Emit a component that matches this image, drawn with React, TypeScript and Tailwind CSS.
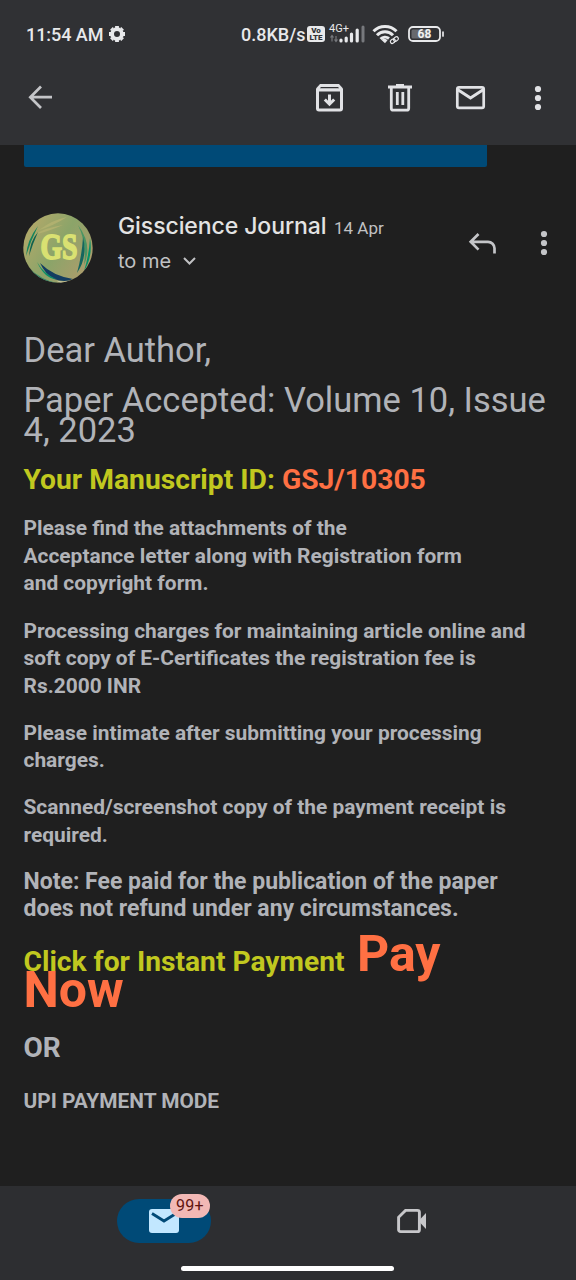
import React from "react";

type IconProps = { box: string; w: number; h: number; className?: string; children: React.ReactNode };

function Icon({ box, w, h, className = "", children }: IconProps) {
  return (
    <svg viewBox={box} width={w} height={h} fill="none" className={"block shrink-0 " + className}>
      {children}
    </svg>
  );
}

function Dots({ className = "" }: { className?: string }) {
  return (
    <Icon box="0 0 8 26" w={8} h={26} className={className}>
      <circle cx="4" cy="4" r="3.1" fill="currentColor" />
      <circle cx="4" cy="13" r="3.1" fill="currentColor" />
      <circle cx="4" cy="22" r="3.1" fill="currentColor" />
    </Icon>
  );
}

function StatusBar() {
  return (
    <div className="flex h-[68px] items-center pl-[26px] text-[#e8e9eb]">
      <span className="mt-[2px] w-[79px] whitespace-nowrap text-[18px] font-medium leading-[22px] tracking-[-0.05px]">11:54 AM</span>
      <Icon box="-10 -10 20 20" w={20} h={20} className="ml-[2px]">
        <circle r="4.900" stroke="currentColor" strokeWidth="3.800" />
        <path
          d="M0 -8V-6M0 8V6M-8 0H-6M8 0H6M-5.600 -5.600L-4.400 -4.400M5.600 5.600L4.400 4.400M-5.600 5.600L-4.400 4.400M5.600 -5.600L4.400 -4.400"
          stroke="currentColor"
          strokeWidth="3.800"
        />
      </Icon>
      <span className="ml-[114px] mt-[2px] w-[65px] whitespace-nowrap text-[18px] font-medium leading-[22px]">0.8KB/s</span>
      <div className="ml-px flex h-[16px] w-[18px] flex-col items-center justify-center rounded-[3px] bg-[#e8e9eb] text-[8px] font-black leading-[7px] text-[#303134]">
        <span>Vo</span>
        <span>LTE</span>
      </div>
      <div className="relative ml-[4px] h-[24px] w-[37px]">
        <Icon box="0 0 37 24" w={37} h={24}>
          <path d="M3 19.500v-6M7 14v6M1.500 15.500L3 13.500l1.500 2M5.500 17.500L7 19.500 8.500 17.500" stroke="#77797d" strokeWidth="1.200" />
          <path d="M12 19v-1M17.200 19v-3M22.500 19v-7M28.200 19V8" stroke="currentColor" strokeWidth="3.200" strokeLinecap="round" />
          <path d="M34 19V5" stroke="#77797d" strokeWidth="3" strokeLinecap="round" />
        </Icon>
        <span className="absolute left-0 top-[1px] text-[11px] leading-[11px]">4G+</span>
      </div>
      <Icon box="0 0 28 24" w={28} h={24} className="ml-[6px]">
        <path d="M1.500 9.300a16 16 0 0 1 23 0M5 13.300a11 11 0 0 1 16 0M8.500 17a6.500 6.500 0 0 1 8.500-.5" stroke="currentColor" strokeWidth="3" />
        <path d="M9.500 18l3.500 3.300 2.500-3a4 4 0 0 0-6-.3z" fill="currentColor" />
        <g stroke="currentColor" strokeWidth="1.200">
          <rect x="18.200" y="17.300" width="5.200" height="3.700" rx="1.850" transform="rotate(-35 20.800 19.100)" />
          <rect x="21.300" y="15.200" width="5.200" height="3.700" rx="1.850" transform="rotate(-35 23.900 17)" />
        </g>
      </Icon>
      <Icon box="0 0 38 18" w={38} h={18} className="ml-[7px]">
        <rect x="2" y="2" width="31" height="14" rx="4" stroke="currentColor" strokeWidth="1.800" />
        <rect x="4.500" y="4.500" width="18" height="9" rx="1.500" fill="#67696d" />
        <path d="M36 7v4" stroke="currentColor" strokeWidth="1.700" strokeLinecap="round" />
        <text x="17.500" y="13.200" textAnchor="middle" fontFamily="Roboto" fontWeight="700" fontSize="12" fill="#f1f1f1">68</text>
      </Icon>
    </div>
  );
}

function Toolbar() {
  return (
    <div className="flex h-[59px] items-center text-[#e1e2e5]">
      <Icon box="22 79.500 36 36" w={36} h={36} className="ml-[22px] text-[#c4c5c8]">
        <path d="M52 96.700H30.500M41 86l-10.700 10.700L41 107.500" stroke="currentColor" strokeWidth="2.700" />
      </Icon>
      <Icon box="312 80 36 36" w={36} h={36} className="ml-[254px]">
        <path fill="currentColor" d="M320 84h19l4 4.500v20a3 3 0 0 1-3 3h-21a3 3 0 0 1-3-3v-20z" />
        <path fill="#303134" d="M321 87h17l1.200 1.300h-19.400zM319 91.500h21v17h-21z" />
        <path d="M329.500 94.500v9M324.800 99.500l4.700 4.700 4.700-4.700" stroke="currentColor" strokeWidth="3" />
      </Icon>
      <Icon box="382 80 36 36" w={36} h={36} className="ml-[34px]">
        <path d="M391.300 87v21.200a2 2 0 0 0 2 2h13.400a2 2 0 0 0 2-2V87M388 87h24M397.300 92v13M402.800 92v13" stroke="currentColor" strokeWidth="2.800" />
        <path d="M396 84h8v3h-8z" fill="currentColor" />
      </Icon>
      <Icon box="452 80 36 36" w={36} h={36} className="ml-[34px]">
        <rect x="457.300" y="87.300" width="26.400" height="20.600" rx="1.700" stroke="currentColor" strokeWidth="2.700" />
        <path d="M457.500 89.500l13 8.500 13-8.500" stroke="currentColor" strokeWidth="3" />
      </Icon>
      <Dots className="ml-[46px]" />
    </div>
  );
}

function Avatar() {
  return (
    <Icon box="0 0 70 70" w={70} h={70}>
      <defs>
        <linearGradient id="disc" x1="0" y1="0.2" x2="1" y2="0.8">
          <stop offset="0" stopColor="#b5a969" />
          <stop offset="0.5" stopColor="#8ba469" />
          <stop offset="1" stopColor="#b09c6c" />
        </linearGradient>
        <clipPath id="round"><circle cx="35" cy="35" r="34.700" /></clipPath>
      </defs>
      <g clipPath="url(#round)">
        <rect width="70" height="70" fill="url(#disc)" />
        <path d="M16 17Q29 7 44 4Q30 13 16 17zM10 22Q25 14 40 12Q24 19 10 22z" fill="#b0b06f" />
        <path d="M3 43Q4 27 15 13Q8 27 3 43z" fill="#16845d" />
        <path d="M6 43Q7 28 15 19Q10 30 6 43z" fill="#11624f" />
        <path d="M55 12Q70 32 61 52Q64 30 55 12z" fill="#4a9463" />
        <path d="M60 24Q65 44 54 60Q59 42 60 24z" fill="#15665e" />
        <path d="M67 25Q70 44 61 58Q66 42 67 25z" fill="#079268" />
        <path d="M17 50Q30 63 50 66Q42 70 31 66Q22 61 17 50z" fill="#133d61" />
        <path d="M14 49Q21 61 33 66Q22 66 14 49z" fill="#0a8d69" />
        <path d="M6 55Q18 67 34 70L16 70z" fill="#2b8068" />
        <path d="M34 68Q43 70 50 66.500Q45 69 38 70z" fill="#e8e3c0" />
      </g>
      <text x="36" y="46.300" textAnchor="middle" textLength="37" lengthAdjust="spacingAndGlyphs" fontFamily="Liberation Serif" fontWeight="700" fontSize="36" fill="#d9e172" stroke="#d9e172" strokeWidth="1.800">GS</text>
    </Icon>
  );
}

function Sender() {
  return (
    <div className="flex h-[84px] items-start pl-[23px]">
      <Avatar />
      <div className="ml-[25px] w-[351px]">
        <div className="flex h-[26px] items-baseline whitespace-nowrap">
          <span className="w-[216px] font-[Inter] text-[23px] font-medium leading-[26px] tracking-[-0.08px] text-[#e3e3e3]">Gisscience Journal</span>
          <span className="text-[17px] leading-[26px] text-[#c0c1c3]">14 Apr</span>
        </div>
        <div className="mt-[9px] flex h-[26px] items-center text-[#c0c1c3]">
          <span className="w-[64px] whitespace-nowrap font-[Inter] text-[20px] leading-[26px]">to me</span>
          <Icon box="0 0 16 12" w={16} h={12}>
            <path d="M2 3l5.500 5.500L13 3" stroke="currentColor" strokeWidth="2" />
          </Icon>
        </div>
      </div>
      <Icon box="465 228 36 32" w={36} h={32} className="-ml-[4px] mt-[15px] text-[#c4c5c8]">
        <path d="M478.500 234l-7.800 7.800 7.800 7.800M471 241.800h17a6.500 6.500 0 0 1 6.500 6.500v5.300" stroke="currentColor" strokeWidth="2.700" />
      </Icon>
      <Dots className="ml-[39px] mt-[17px] text-[#c4c5c8]" />
    </div>
  );
}

function Message() {
  return (
    <div className="whitespace-nowrap pl-[23.500px] pt-[38.400px] text-[#b1b3b8]">
      <p className="text-[34.500px] leading-[30px]">Dear Author,</p>
      <p className="mt-[20px] text-[34.500px] leading-[30px]">
        Paper Accepted: Volume 10, Issue
        <br />
        4, 2023
      </p>
      <p className="mt-[20px] text-[28.250px] font-bold leading-[30px] text-[#c1c81f]">
        Your Manuscript ID: <span className="text-[#ff7043]">GSJ/10305</span>
      </p>
      <div className="mt-[19.700px] text-[20.920px] font-bold leading-[27.500px]">
        <p>
          Please find the attachments of the
          <br />
          Acceptance letter along with Registration form
          <br />
          and copyright form.
        </p>
        <p className="mt-[20px]">
          Processing charges for maintaining article online and
          <br />
          soft copy of E-Certificates the registration fee is
          <br />
          Rs.2000 INR
        </p>
        <p className="mt-[19.500px]">
          Please intimate after submitting your processing
          <br />
          charges.
        </p>
        <p className="mt-[19.500px]">
          Scanned/screenshot copy of the payment receipt is
          <br />
          required.
        </p>
      </div>
      <p className="mt-[20px] text-[23px] font-bold leading-[26.500px]">
        Note: Fee paid for the publication of the paper
        <br />
        does not refund under any circumstances.
      </p>
      <div className="mt-[15px] font-bold text-[#ff7043]">
        <div className="flex h-[35.500px] items-baseline leading-[35.500px]">
          <span className="w-[333.500px] text-[28.200px] text-[#c1c81f]">Click for Instant Payment</span>
          <span className="text-[50px]">Pay</span>
        </div>
        <div className="h-[35.500px] text-[50px] leading-[35.500px]">Now</div>
      </div>
      <p className="mt-[25px] text-[28px] font-bold leading-[30px]">OR</p>
      <p className="mt-[25px] text-[20.850px] font-bold leading-[27px]">UPI PAYMENT MODE</p>
    </div>
  );
}

function BottomNav() {
  return (
    <nav className="flex h-[94px] flex-col bg-[#2d2e31]">
      <div className="flex pt-[13px]">
        <div className="relative ml-[117px] h-[44px] w-[94px] rounded-full bg-[#004a77]">
          <Icon box="0 0 30 24" w={30} h={24} className="ml-[32px] mt-[10px]">
            <rect width="30" height="24" rx="3" fill="#c2e7ff" />
            <path d="M3 4.500l12 7.500 12-7.500" stroke="#004a77" strokeWidth="2.800" />
          </Icon>
          <span className="absolute -top-[5px] left-[53px] flex h-[24px] w-[40px] items-center justify-center rounded-full bg-[#f2b8b5] text-[16px] leading-[24px] tracking-[0.3px] text-[#601410]">99+</span>
        </div>
        <Icon box="0 0 32 26" w={32} h={26} className="ml-[184.500px] mt-[9px] text-[#c7c7ca]">
          <path d="M9.500 2.400h12a1.900 1.900 0 0 1 1.900 1.900v17.400a1.900 1.900 0 0 1-1.900 1.900h-17a1.900 1.900 0 0 1-1.900-1.900V9.300z" stroke="currentColor" strokeWidth="2.900" />
          <path d="M22.500 13l7.500-8v16z" fill="currentColor" />
        </Icon>
      </div>
      <div className="ml-[181px] mt-[23px] h-[5px] w-[213px] rounded-full bg-white" />
    </nav>
  );
}

export default function App() {
  return (
    <div className="flex h-[1280px] w-[576px] flex-col overflow-hidden bg-[#1f1f1f] font-[Roboto,sans-serif]">
      <header className="h-[145px] shrink-0 bg-[#303134]">
        <StatusBar />
        <Toolbar />
      </header>
      <main className="h-[1041px] shrink-0">
        <div className="ml-[24px] h-[22px] w-[463px] rounded-b-[2px] bg-[#004a77]" />
        <div className="mt-[46px]">
          <Sender />
        </div>
        <Message />
      </main>
      <BottomNav />
    </div>
  );
}
